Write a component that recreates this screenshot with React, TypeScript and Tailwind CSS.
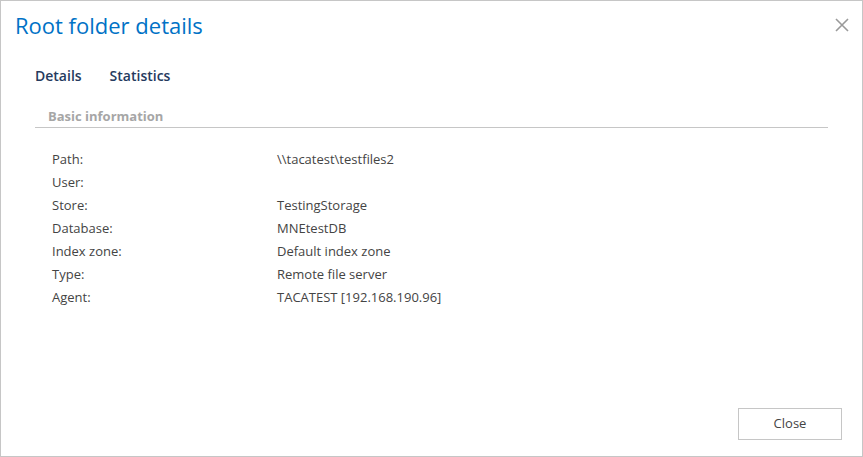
import React from "react";

const rows: [string, string][] = [
  ["Path:", "\\\\tacatest\\testfiles2"],
  ["User:", ""],
  ["Store:", "TestingStorage"],
  ["Database:", "MNEtestDB"],
  ["Index zone:", "Default index zone"],
  ["Type:", "Remote file server"],
  ["Agent:", "TACATEST [192.168.190.96]"],
];

export default function App() {
  return (
    <div
      className="w-[863px] h-[457px] bg-white border border-[#c6c6c6] flex flex-col relative"
      style={{ fontFamily: '"Open Sans", "Noto Sans", sans-serif' }}
    >
      <button className="absolute right-[13px] top-[17px] w-[14px] h-[14px] text-[#9a9a9a]">
        <svg viewBox="0 0 14 14" width="14" height="14">
          <path d="M1 1L13 13M13 1L1 13" stroke="currentColor" strokeWidth="1.6" />
        </svg>
      </button>
      <div className="pl-[14px] pt-[8px] text-[22px] leading-[32px] text-[#0072c6]">
        Root folder details
      </div>
      <div className="flex gap-[28px] pl-[34px] pt-[25px] text-[14px] leading-[20px] font-semibold text-[#253a5e]">
        <span>Details</span>
        <span>Statistics</span>
      </div>
      <div className="mx-[34px] mt-[21px] border-b border-[#c6c6c6] pl-[13px] pb-[2px] text-[13px] leading-[18px] font-bold text-[#a6a6a6]">
        Basic information
      </div>
      <div className="pl-[51px] pt-[20px] flex flex-col text-[13px] leading-[23px] text-[#444444]">
        {rows.map(([k, v]) => (
          <div key={k} className="flex h-[23px]">
            <span className="w-[225px]">{k}</span>
            <span>{v}</span>
          </div>
        ))}
      </div>
      <div className="flex-1" />
      <div className="flex justify-end pr-[20px] pb-[16px]">
        <button className="w-[104px] h-[32px] border border-[#c6c6c6] bg-white text-[13px] text-[#444444]">
          Close
        </button>
      </div>
    </div>
  );
}
